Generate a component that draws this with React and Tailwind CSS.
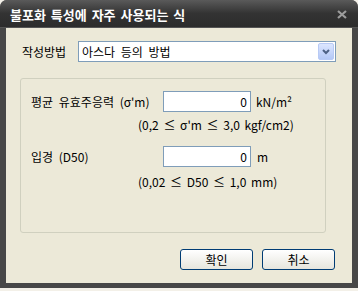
import React from "react";

const F = { fontFamily: '"Noto Sans CJK KR", "Noto Sans", sans-serif' };

export default function App() {
  return (
    <div className="w-[358px] h-[291px] bg-[#f3f0e8] overflow-hidden" style={F}>
      <div className="w-[358px] h-[288px] bg-[#474747] rounded-t-[7px] flex flex-col overflow-hidden">
        {/* title bar */}
        <div className="h-[28px] shrink-0 flex items-center justify-between pl-[10px] pr-[11px] bg-gradient-to-b from-[#5a5a5a] via-[#333333] to-[#2c2c2c] border-b border-[#555]">
          <span className="text-white font-bold text-[13px] leading-none [word-spacing:2px] mt-[2px]">
            불포화 특성에 자주 사용되는 식
          </span>
          <svg width="10" height="9" viewBox="0 0 10 9" className="mt-[1px]">
            <path d="M1 1 L9 8 M9 1 L1 8" stroke="#9c9c9c" strokeWidth="2.2" />
          </svg>
        </div>
        {/* body */}
        <div className="flex flex-1 px-[6px] pb-[5px]">
          <div className="flex-1 bg-[#ece9d8] flex flex-col text-[12px] text-black [word-spacing:3px]">
            {/* select row */}
            <div className="flex items-center mt-[13px] pl-[16px]">
              <span className="w-[56px] leading-none">작성방법</span>
              <div className="w-[258px] h-[21px] bg-white border border-[#7f9db9] flex items-center justify-between pl-[3px] pr-[1px]">
                <span className="leading-none">아스다 등의 방법</span>
                <div className="w-[16px] h-[17px] rounded-[2px] border border-[#b8caf5] bg-gradient-to-b from-[#dce6ff] to-[#b4c8f6] flex items-center justify-center">
                  <svg width="8" height="6" viewBox="0 0 8 6">
                    <path d="M1 1 L4 4 L7 1" stroke="#4d6185" strokeWidth="2" fill="none" />
                  </svg>
                </div>
              </div>
            </div>
            {/* group box */}
            <div className="ml-[14px] mt-[16px] w-[306px] h-[155px] border border-[#d0d0bf] rounded-[3px] flex flex-col pl-[10px]">
              <div className="flex items-center mt-[12px]">
                <span className="w-[132px] leading-none">평균 유효주응력 (σ'm)</span>
                <div className="w-[88px] h-[21px] bg-white border border-[#7f9db9] flex items-center justify-end pr-[3px] leading-none">0</div>
                <span className="ml-[5px] leading-none">kN/m²</span>
              </div>
              <div className="ml-[107px] mt-[7px] leading-none [word-spacing:2px]">(0,2 ≤ σ'm ≤ 3,0 kgf/cm2)</div>
              <div className="flex items-center mt-[15px]">
                <span className="w-[132px] leading-none">입경 (D50)</span>
                <div className="w-[88px] h-[21px] bg-white border border-[#7f9db9] flex items-center justify-end pr-[3px] leading-none">0</div>
                <span className="ml-[6px] leading-none">m</span>
              </div>
              <div className="ml-[107px] mt-[9px] leading-none [word-spacing:2px]">(0,02 ≤ D50 ≤ 1,0 mm)</div>
            </div>
            {/* buttons */}
            <div className="flex mt-[16px] pl-[174px] gap-[9px]">
              <button className="w-[73px] h-[21px] rounded-[3px] border border-[#003c74] bg-gradient-to-b from-white to-[#e6e5dd] text-[12px] leading-none flex items-center justify-center">확인</button>
              <button className="w-[73px] h-[21px] rounded-[3px] border border-[#003c74] bg-gradient-to-b from-white to-[#e6e5dd] text-[12px] leading-none flex items-center justify-center">취소</button>
            </div>
          </div>
        </div>
      </div>
    </div>
  );
}
